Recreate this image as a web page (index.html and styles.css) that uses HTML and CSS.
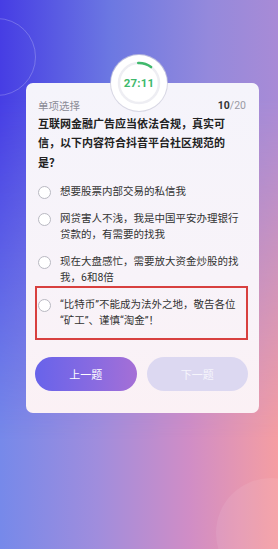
FILE: index.html
```html
<!DOCTYPE html>
<html lang="zh-CN">
<head>
    <meta charset="UTF-8">
    <meta name="viewport" content="width=device-width, initial-scale=1.0">
    <title>答题</title>
    <link rel="stylesheet" href="styles.css">
</head>
<body>
    <div class="screen">
        <div class="card">
            <div class="timer">
                <svg width="56" height="56" viewBox="0 0 56 56">
                    <circle cx="28" cy="28" r="20" fill="none" stroke="#eeeef3" stroke-width="2.5"/>
                    <path d="M27.3 8.01 A20 20 0 0 1 40.04 12.03" fill="none" stroke="#3fb96c" stroke-width="2.6" stroke-linecap="round"/>
                </svg>
                <span class="time">27:11</span>
            </div>

            <div class="card-head">
                <span class="type">单项选择</span>
                <span class="progress"><b>10</b>/20</span>
            </div>

            <p class="question">互联网金融广告应当依法合规，真实可信，以下内容符合抖音平台社区规范的是？</p>

            <ul class="options">
                <li class="option"><span class="radio"></span><span class="label">想要股票内部交易的私信我</span></li>
                <li class="option"><span class="radio"></span><span class="label">网贷害人不浅，我是中国平安办理银行贷款的，有需要的找我</span></li>
                <li class="option"><span class="radio"></span><span class="label">现在大盘感忙，需要放大资金炒股的找我，6和8倍</span></li>
                <li class="option marked"><span class="radio"></span><span class="label">“比特币”不能成为法外之地，敬告各位“矿工”、谨慎“淘金”！</span></li>
            </ul>

            <div class="actions">
                <button class="btn btn-prev">上一题</button>
                <button class="btn btn-next">下一题</button>
            </div>
        </div>
        <div class="glow"></div>
    </div>
</body>
</html>
```

FILE: styles.css
```css
* {
    box-sizing: border-box;
}

body {
    margin: 0;
    font-family: Roboto, "Noto Sans CJK SC", sans-serif;
    color: #222;
}

.screen {
    position: relative;
    width: 278px;
    height: 549px;
    overflow: hidden;
    padding-top: 83px;
    background: linear-gradient(90deg, #7689ea 0%, #a08ddd 35%, #d08dc6 68%, #f59ea2 100%);
}

/* top half is bluer, fades into the bottom colours */
.screen::before {
    content: "";
    position: absolute;
    inset: 0;
    background: linear-gradient(90deg, #463de4 0%, #6c78e2 40%, #9489dc 75%, #a88bd6 100%);
    -webkit-mask-image: linear-gradient(180deg, #000 0%, #000 18%, transparent 80%);
    mask-image: linear-gradient(180deg, #000 0%, #000 18%, transparent 80%);
}

/* faint decoration ring, top left */
.screen::after {
    content: "";
    position: absolute;
    left: -42px;
    top: 18px;
    width: 76px;
    height: 76px;
    border-radius: 50%;
    border: 1px solid rgba(255, 255, 255, 0.22);
}

/* soft disc, bottom right */
.glow {
    position: absolute;
    right: -48px;
    top: 478px;
    width: 110px;
    height: 110px;
    border-radius: 50%;
    background: rgba(255, 255, 255, 0.08);
}

.card {
    position: relative;
    z-index: 1;
    width: 233px;
    margin-left: 26px;
    padding: 14px 13px 22px 12px;
    border-radius: 7px;
    background: linear-gradient(180deg, #f5f4fb 0%, #f8f3f9 60%, #fbf1f5 100%);
}

.timer {
    position: absolute;
    top: -28px;
    left: 85px;
    width: 56px;
    height: 56px;
    border-radius: 50%;
    background: #fff;
    box-shadow: 0 0 0 1px rgba(205, 205, 220, 0.75);
    display: flex;
    align-items: center;
    justify-content: center;
}

.timer svg {
    position: absolute;
    top: 0;
    left: 0;
}

.time {
    position: relative;
    font-size: 11.5px;
    font-weight: 700;
    color: #3fb96c;
    letter-spacing: 0.2px;
}

.card-head {
    display: flex;
    justify-content: space-between;
    align-items: center;
    height: 16px;
    font-size: 10.5px;
    color: #8b8b96;
}

.progress {
    font-size: 10.5px;
    color: #9a9aa4;
}

.progress b {
    color: #333;
    font-weight: 700;
}

.question {
    margin: 1.5px 14px 0 0;
    font-size: 11px;
    line-height: 19.5px;
    font-weight: 700;
    color: #222;
}

.options {
    list-style: none;
    margin: 11px 0 0;
    padding: 0;
    display: flex;
    flex-direction: column;
    gap: 11px;
}

.option {
    position: relative;
    display: flex;
    align-items: flex-start;
    gap: 9px;
    font-size: 10.5px;
    line-height: 16px;
    color: #333;
}

.radio {
    flex: none;
    width: 13px;
    height: 13px;
    margin-top: 1.5px;
    border-radius: 50%;
    border: 1px solid #b9b9c2;
    background: #fff;
}

.label {
    flex: 1;
}

/* red highlight box drawn over the answer */
.option.marked::after {
    content: "";
    position: absolute;
    top: -11px;
    bottom: -11px;
    left: -3px;
    right: -2px;
    border: 2px solid #d8403f;
}

.actions {
    display: flex;
    gap: 10px;
    margin: 28px -2px 0 -3px;
}

.btn {
    flex: 1;
    height: 34px;
    border: none;
    border-radius: 17px;
    font-family: inherit;
    font-size: 11px;
    color: #fff;
    cursor: pointer;
}

.btn-prev {
    background: linear-gradient(90deg, #6863ea 0%, #8a6be0 60%, #a56fd6 100%);
}

.btn-next {
    background: #dcd8f1;
    color: #f6f5fc;
}
```
